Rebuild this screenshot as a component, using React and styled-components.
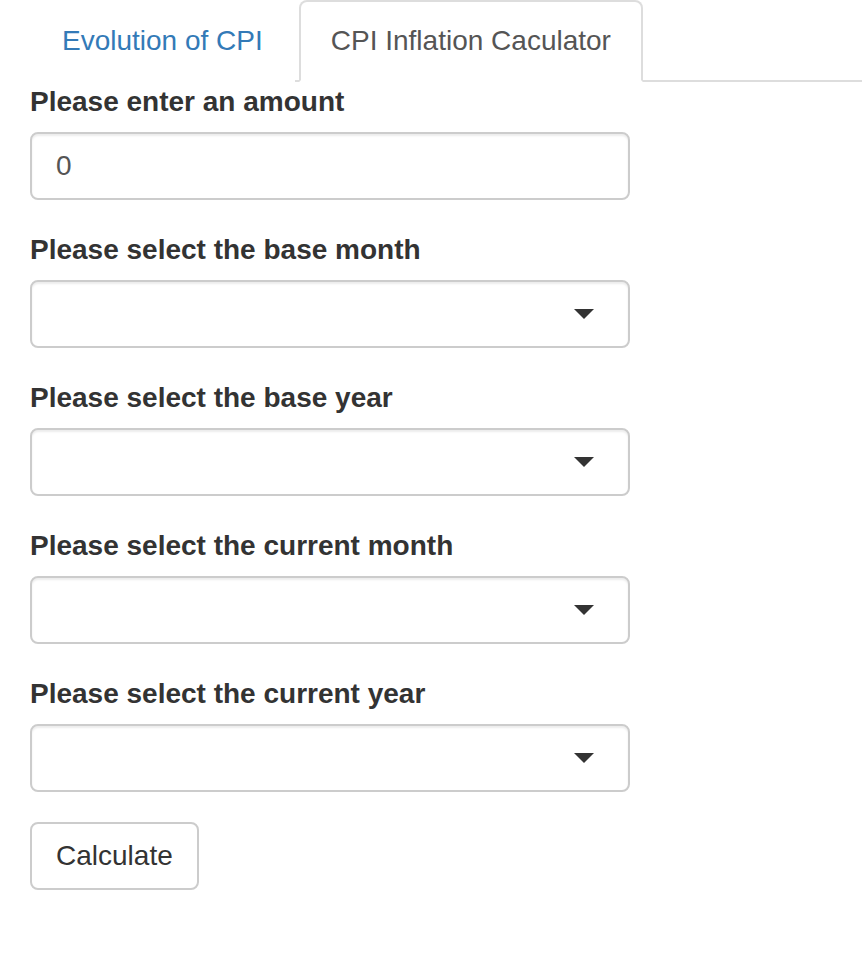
import React from 'react'
import styled, { createGlobalStyle } from 'styled-components'

const GlobalStyle = createGlobalStyle`
    body {
        margin: 0;
        background: #fff;
        color: #333;
        font-family: "Liberation Sans", Arial, sans-serif;
        font-size: 28px;
        line-height: 40px;
    }
    * { box-sizing: border-box; }
`;

const Page = styled.div`
    padding-left: 30px;
`;

const TabList = styled.ul`
    display: flex;
    list-style: none;
    margin: 0;
    padding: 0;
    border-bottom: 2px solid #ddd;
`;

const TabItem = styled.li`
    margin-bottom: -2px;
    margin-right: 4px;
`;

const TabLink = styled.a`
    display: block;
    padding: 19px 30px;
    line-height: 40px;
    border: 2px solid ${props => props.active ? '#ddd' : 'transparent'};
    border-bottom-color: transparent;
    border-radius: 8px 8px 0 0;
    background: #fff;
    color: ${props => props.active ? '#555' : '#337ab7'};
    text-decoration: none;
    cursor: pointer;
`;

const Form = styled.div`
    width: 600px;
`;

const FormGroup = styled.div`
    margin-bottom: 30px;
`;

const Label = styled.label`
    display: block;
    font-weight: bold;
    line-height: 40px;
    margin-bottom: 10px;
`;

const TextInput = styled.input`
    display: block;
    width: 100%;
    height: 68px;
    padding: 12px 24px;
    border: 2px solid #ccc;
    border-radius: 8px;
    box-shadow: inset 0 2px 2px rgba(0,0,0,0.075);
    font-family: inherit;
    font-size: 28px;
    color: #555;
    outline: none;
`;

const SelectBox = styled.div`
    display: flex;
    align-items: center;
    justify-content: flex-end;
    height: 68px;
    padding: 0 34px;
    border: 2px solid #ccc;
    border-radius: 8px;
    box-shadow: inset 0 2px 2px rgba(0,0,0,0.075);
    background: #fff;
`;

const Caret = styled.span`
    width: 0;
    height: 0;
    border-style: solid;
    border-width: 10px 10px 0 10px;
    border-color: #333 transparent transparent transparent;
`;

const Button = styled.button`
    height: 68px;
    padding: 12px 24px;
    border: 2px solid #ccc;
    border-radius: 8px;
    background: #fff;
    color: #333;
    font-family: inherit;
    font-size: 28px;
    line-height: 40px;
    cursor: pointer;
`;

const selects = [
    'Please select the base month',
    'Please select the base year',
    'Please select the current month',
    'Please select the current year',
]

const App = () => (
    <Page>
        <GlobalStyle />
        <TabList>
            <TabItem><TabLink>Evolution of CPI</TabLink></TabItem>
            <TabItem><TabLink active>CPI Inflation Caculator</TabLink></TabItem>
        </TabList>
        <Form>
            <FormGroup>
                <Label>Please enter an amount</Label>
                <TextInput type="number" defaultValue="0" />
            </FormGroup>
            {
                selects.map((label, index) => (
                    <FormGroup key={`select-${index}`}>
                        <Label>{label}</Label>
                        <SelectBox>
                            <Caret />
                        </SelectBox>
                    </FormGroup>
                ))
            }
            <Button>Calculate</Button>
        </Form>
    </Page>
)

export default App
